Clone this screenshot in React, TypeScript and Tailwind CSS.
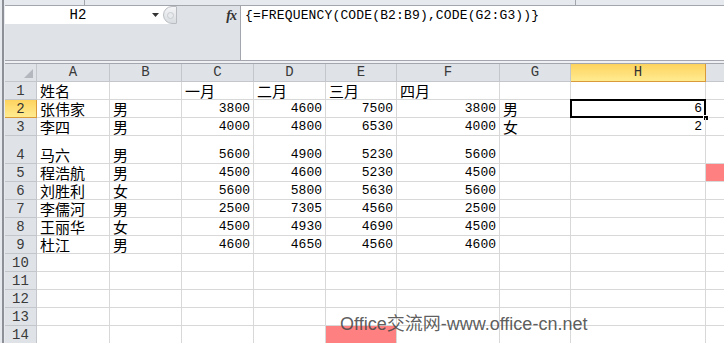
import React from 'react';

const cols = [
  { key: 'A', w: 'w-[73px]' },
  { key: 'B', w: 'w-[72px]' },
  { key: 'C', w: 'w-[72px]' },
  { key: 'D', w: 'w-[72px]' },
  { key: 'E', w: 'w-[71px]' },
  { key: 'F', w: 'w-[103px]' },
  { key: 'G', w: 'w-[71px]' },
  { key: 'H', w: 'w-[135px]' },
];

type Val = string | number | null;

const rows: Val[][] = [
  ['姓名', null, '一月', '二月', '三月', '四月', null, null],
  ['张伟家', '男', 3800, 4600, 7500, 3800, '男', 6],
  ['李四', '男', 4000, 4800, 6530, 4000, '女', 2],
  ['马六', '男', 5600, 4900, 5230, 5600, null, null],
  ['程浩航', '男', 4500, 4600, 5230, 4500, null, null],
  ['刘胜利', '女', 5600, 5800, 5630, 5600, null, null],
  ['李儒河', '男', 2500, 7305, 4560, 2500, null, null],
  ['王丽华', '女', 4500, 4930, 4690, 4500, null, null],
  ['杜江', '男', 4600, 4650, 4560, 4600, null, null],
  [null, null, null, null, null, null, null, null],
  [null, null, null, null, null, null, null, null],
  [null, null, null, null, null, null, null, null],
  [null, null, null, null, null, null, null, null],
  [null, null, null, null, null, null, null, null],
];

const cjk = "font-['Noto_Sans_CJK_SC',sans-serif]";
const mono = "font-['Liberation_Mono','DejaVu_Sans_Mono',monospace]";

const Cell = ({ v, w, selected, pink }: { v: Val; w: string; selected?: boolean; pink?: boolean }) => (
  <div
    className={`relative ${w} shrink-0 h-full box-border border-r border-b border-[#d8d8d8] flex items-end ${
      pink ? 'bg-[#ff8080]' : ''
    } ${typeof v === 'number' ? 'justify-end pr-[3px]' : 'pl-[3px]'}`}
  >
    {typeof v === 'number' && (
      <span className={`block ${mono} text-[13px] leading-[16px] text-black`}>{v}</span>
    )}
    {typeof v === 'string' && (
      <span className={`block ${cjk} text-[15px] leading-[16px] text-black whitespace-nowrap`}>{v}</span>
    )}
    {selected && (
      <>
        <div className="absolute -left-px -top-px right-[-1px] bottom-[-1px] border-2 border-black pointer-events-none" />
        <div className="absolute right-[-4px] bottom-[-4px] w-[6px] h-[6px] bg-black border border-white" />
      </>
    )}
  </div>
);

export default function App() {
  return (
    <div className="relative w-[724px] h-[343px] overflow-hidden bg-white flex">
      {/* left window edge */}
      <div className="w-[5px] shrink-0 h-full bg-[#e6e9ed] pl-[2px]">
        <div className="w-[2px] h-full bg-[#8d9197]" />
      </div>

      <div className="flex-1 flex flex-col min-w-0">
        {/* ribbon remnant */}
        <div className="h-[6px] shrink-0 bg-[#e6e9ed] border-b border-[#a3a7ad] flex">
          <div className="w-[80px] border-r border-[#a3a7ad]" />
          <div className="w-[491px] border-r border-[#a3a7ad]" />
        </div>

        {/* formula bar */}
        <div className="h-[54px] shrink-0 flex">
          <div className="w-[236px] shrink-0 bg-[#dfe3e8] border-r border-[#a3a7ad] flex flex-col">
            <div className="h-[18px] flex items-center bg-white">
              <div className={`w-[146px] text-center ${mono} text-[14px] text-black`}>H2</div>
              <svg width="7" height="4" viewBox="0 0 7 4" className="ml-[1px]">
                <path d="M0 0h7L3.5 4z" fill="#333" />
              </svg>
              <div className="ml-[4px] w-[14px] h-[18px] rounded-l-full border border-[#b9bdc2] bg-gradient-to-b from-[#f4f5f7] to-[#d9dce0] flex items-center justify-center">
                <div className="w-[7px] h-[7px] rounded-full bg-[#e8eaed] border border-[#c8ccd1]" />
              </div>
              <div className="flex-1 h-full bg-[#dfe3e8] flex items-center justify-end pr-[4px]">
                <span className="font-['Liberation_Serif',serif] italic font-bold text-[14px] text-[#333] tracking-[-1px]">fx</span>
              </div>
            </div>
          </div>
          <div className={`flex-1 bg-white pl-[4px] pt-[1px] ${mono} text-[13px] leading-[17px] tracking-[0.15px] text-black whitespace-nowrap`}>
            {'{=FREQUENCY(CODE(B2:B9),CODE(G2:G3))}'}
          </div>
        </div>

        {/* separator */}
        <div className="h-[4px] shrink-0 bg-[#eef0f3] border-t border-b border-[#a3a7ad]" />

        {/* column headers */}
        <div className="h-[18px] shrink-0 flex bg-[#dfe3e8]">
          <div className="relative w-[32px] shrink-0 h-full border-r border-b border-[#c3c7cc]">
            <svg width="9" height="9" viewBox="0 0 9 9" className="absolute right-[3px] bottom-[3px]">
              <path d="M9 0V9H0z" fill="#b4b8be" />
            </svg>
          </div>
          {cols.map((c) => (
            <div
              key={c.key}
              className={`${c.w} shrink-0 h-full box-border border-r border-b flex items-center justify-center ${mono} text-[14px] ${
                c.key === 'H'
                  ? 'bg-gradient-to-b from-[#fdd35e] to-[#ffeb8f] border-[#d99b3a] text-[#333]'
                  : 'border-[#c3c7cc] text-[#3a3a3a]'
              }`}
            >
              {c.key}
            </div>
          ))}
          <div className="flex-1 border-b border-[#c3c7cc]" />
        </div>

        {/* rows */}
        {rows.map((r, i) => {
          const n = i + 1;
          const h = n === 4 ? 'h-[28px]' : 'h-[18px]';
          return (
            <div key={n} className={`${h} shrink-0 flex`}>
              <div
                className={`w-[32px] shrink-0 h-full box-border border-r border-b flex items-end justify-center ${mono} text-[14px] leading-[16px] ${
                  n === 2
                    ? 'bg-gradient-to-b from-[#fdd35e] to-[#ffeb8f] border-[#d99b3a] text-[#333]'
                    : 'bg-[#dfe3e8] border-[#c3c7cc] text-[#3a3a3a]'
                }`}
              >
                {n}
              </div>
              {cols.map((c, j) => (
                <Cell
                  key={c.key}
                  v={r[j]}
                  w={c.w}
                  selected={n === 2 && c.key === 'H'}
                  pink={n === 14 && c.key === 'E'}
                />
              ))}
              <div
                className={`flex-1 h-full border-b border-[#d8d8d8] ${n === 5 ? 'bg-[#ff8080]' : ''}`}
              />
            </div>
          );
        })}
      </div>

      {/* watermark */}
      <div className="absolute left-[340px] top-[312px] font-['Liberation_Sans','Noto_Sans_CJK_SC',sans-serif] text-[18px] leading-[24px] text-[#4a4a4a]/90 whitespace-nowrap pointer-events-none">
        Office交流网-www.office-cn.net
      </div>
    </div>
  );
}
